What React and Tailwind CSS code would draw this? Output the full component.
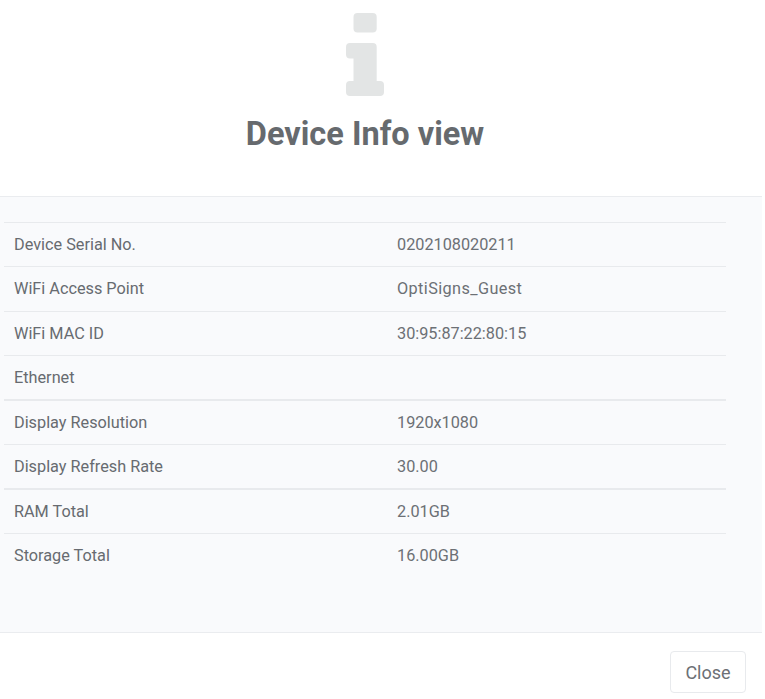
const rows = [
  { label: "Device Serial No.", value: "0202108020211", valCls: "", rowCls: "" },
  { label: "WiFi Access Point", value: "OptiSigns_Guest", valCls: "tracking-[0.4px]", rowCls: "" },
  { label: "WiFi MAC ID", value: "30:95:87:22:80:15", valCls: "", rowCls: "" },
  { label: "Ethernet", value: "", valCls: "", rowCls: "" },
  { label: "Display Resolution", value: "1920x1080", valCls: "", rowCls: "shadow-[0_-1px_0_#e8eaed]" },
  { label: "Display Refresh Rate", value: "30.00", valCls: "", rowCls: "" },
  { label: "RAM Total", value: "2.01GB", valCls: "", rowCls: "shadow-[0_-1px_0_#e8eaed]" },
  { label: "Storage Total", value: "16.00GB", valCls: "", rowCls: "" },
];

export default function App() {
  return (
    <div className="w-[762px] h-[699px] flex flex-col bg-white font-['Roboto',sans-serif] text-[#6c7075]">
      <div className="h-[197px] shrink-0 border-b border-[#eaecef] flex flex-col items-center pt-[13px] pr-[32px]">
        <svg width="38" height="83" viewBox="0 0 38 83" className="block">
          <rect x="7.5" y="0" width="23.2" height="19.5" rx="4" fill="#e3e5e5" />
          <path d="M4 30H26.7a4 4 0 0 1 4 4V68H34a4 4 0 0 1 4 4V79a4 4 0 0 1-4 4H4a4 4 0 0 1-4-4V72a4 4 0 0 1 4-4H7.5V45.500H4a4 4 0 0 1-4-4V34a4 4 0 0 1 4-4Z" fill="#e3e5e5" />
        </svg>
        <h1 className="mt-[16px] text-[32.5px] leading-[44px] font-bold text-[#666a6e]">Device Info view</h1>
      </div>
      <div className="flex-1 bg-[#f9fafc] pt-[25px] pl-[4px] pr-[36px]">
        {rows.map((r) => (
          <div
            key={r.label}
            className={"flex items-center h-[44.43px] pt-[1px] border-t border-[#e8eaed] " + r.rowCls}
          >
            <div className="w-[393px] pl-[10px] text-[16.25px] text-[#676b70]">{r.label}</div>
            <div className={"text-[16.25px] text-[#6c7075] " + r.valCls}>{r.value}</div>
          </div>
        ))}
      </div>
      <div className="h-[67px] shrink-0 border-t border-[#eaecef] flex items-start justify-end pt-[18px] pr-[16px]">
        <button className="w-[76px] h-[42px] rounded-[4px] border border-[#e8eaed] bg-white text-[18px] text-[#6c7075]">Close</button>
      </div>
    </div>
  );
}
